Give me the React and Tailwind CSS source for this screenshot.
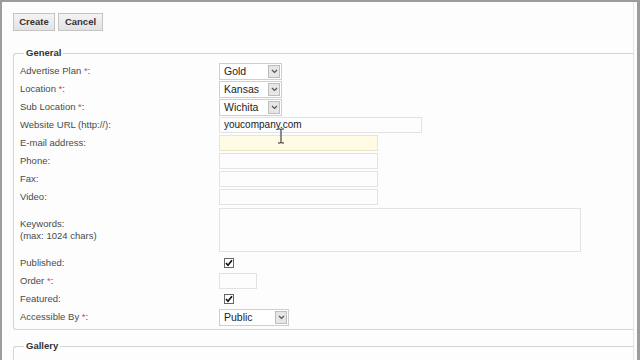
import React from "react";

const F = { fontFamily: '"Liberation Sans", Arial, sans-serif' };

function Req() {
  return <span className="text-[#d05050]"> *</span>;
}

function Select({ value, w }) {
  return (
    <div className={`flex h-[17px] ${w} border border-[#cfcfcf] bg-white`}>
      <div className="flex-1 pl-[4px] text-[10.5px] leading-[15px] text-[#222]">{value}</div>
      <div className="my-[1px] mr-[1px] flex w-[12px] items-center justify-center border border-[#bdbdbd] bg-[#e6e6e6]">
        <svg width="7" height="5" viewBox="0 0 7 5">
          <path d="M1 1 L3.5 3.5 L6 1" stroke="#555" strokeWidth="1.2" fill="none" />
        </svg>
      </div>
    </div>
  );
}

function Input({ w, yellow, children }) {
  return (
    <div
      className={`h-[16px] ${w} border ${yellow ? "border-[#ebe6c4] bg-[#fffbe4]" : "border-[#e2e2e2] bg-[#fdfdfd]"} pl-[4px] text-[10px] leading-[14px] text-[#222]`}
    >
      {children}
    </div>
  );
}

function Check() {
  return (
    <div className="ml-[5px] flex h-[10px] w-[10px] items-center justify-center border border-[#666] bg-white">
      <svg width="8" height="8" viewBox="0 0 8 8">
        <path d="M1 4 L3 6.3 L7 1.2" stroke="#111" strokeWidth="1.6" fill="none" />
      </svg>
    </div>
  );
}

function Row({ label, children, h = "h-[18px]" }) {
  return (
    <div className={`flex ${h} items-center`}>
      <div className="w-[199px] text-[9.5px] leading-[12px] text-[#4a4a4a]">{label}</div>
      <div className="flex items-center">{children}</div>
    </div>
  );
}

export default function App() {
  return (
    <div
      style={F}
      className="relative h-[360px] w-[640px] overflow-hidden border-l-2 border-r-[3px] border-t-2 border-[#9c9c9c] bg-[#fdfdfd]"
    >
      <div className="h-full border-r border-[#e4e4e4] mr-[3px]">
        <div className="flex gap-[3px] pl-[11px] pt-[11px]">
          <div className="flex h-[18px] w-[42px] items-center justify-center border border-[#c4c4c4] bg-gradient-to-b from-[#f4f4f4] to-[#e2e2e2] text-[9.5px] font-bold text-[#333]">
            Create
          </div>
          <div className="flex h-[18px] w-[45px] items-center justify-center border border-[#c4c4c4] bg-gradient-to-b from-[#f4f4f4] to-[#e2e2e2] text-[9.5px] font-bold text-[#333]">
            Cancel
          </div>
        </div>

        <fieldset className="ml-[11px] mt-[16px] rounded-l-[3px] border border-r-0 border-[#d4d4d4] pb-[3px] pl-[6px]">
          <legend className="ml-[4px] px-[2px] text-[9.5px] font-bold leading-[12px] text-[#333]">General</legend>
          <div className="pt-[3px]">
            <Row label={<>Advertise Plan<Req />:</>}>
              <Select value="Gold" w="w-[63px]" />
            </Row>
            <Row label={<>Location<Req />:</>}>
              <Select value="Kansas" w="w-[63px]" />
            </Row>
            <Row label={<>Sub Location<Req />:</>}>
              <Select value="Wichita" w="w-[63px]" />
            </Row>
            <Row label="Website URL (http://):">
              <Input w="w-[203px]">youcompany.com</Input>
            </Row>
            <Row label="E-mail address:">
              <Input w="w-[159px]" yellow />
            </Row>
            <Row label="Phone:">
              <Input w="w-[159px]" />
            </Row>
            <Row label="Fax:">
              <Input w="w-[159px]" />
            </Row>
            <Row label="Video:">
              <Input w="w-[159px]" />
            </Row>
            <Row
              h="h-[48px]"
              label={
                <>
                  Keywords:
                  <br />
                  (max: 1024 chars)
                </>
              }
            >
              <div className="h-[44px] w-[362px] border border-[#e2e2e2] bg-[#fdfdfd]" />
            </Row>
            <Row label="Published:">
              <Check />
            </Row>
            <Row label={<>Order<Req />:</>}>
              <Input w="w-[38px]" />
            </Row>
            <Row label="Featured:">
              <Check />
            </Row>
            <Row label={<>Accessible By<Req />:</>}>
              <Select value="Public" w="w-[70px]" />
            </Row>
          </div>
        </fieldset>

        <fieldset className="ml-[11px] mt-[10px] h-[40px] rounded-l-[3px] border border-r-0 border-[#d4d4d4] pl-[6px]">
          <legend className="ml-[4px] px-[2px] text-[9.5px] font-bold leading-[12px] text-[#333]">Gallery</legend>
        </fieldset>
      </div>

      <svg className="absolute left-[275px] top-[126px]" width="8" height="16" viewBox="0 0 8 16">
        <path d="M1 1 H3 Q4 1 4 2 V14 Q4 15 3 15 H1 M7 1 H5 Q4 1 4 2 M4 14 Q4 15 5 15 H7" stroke="#222" strokeWidth="1" fill="none" />
      </svg>
    </div>
  );
}
